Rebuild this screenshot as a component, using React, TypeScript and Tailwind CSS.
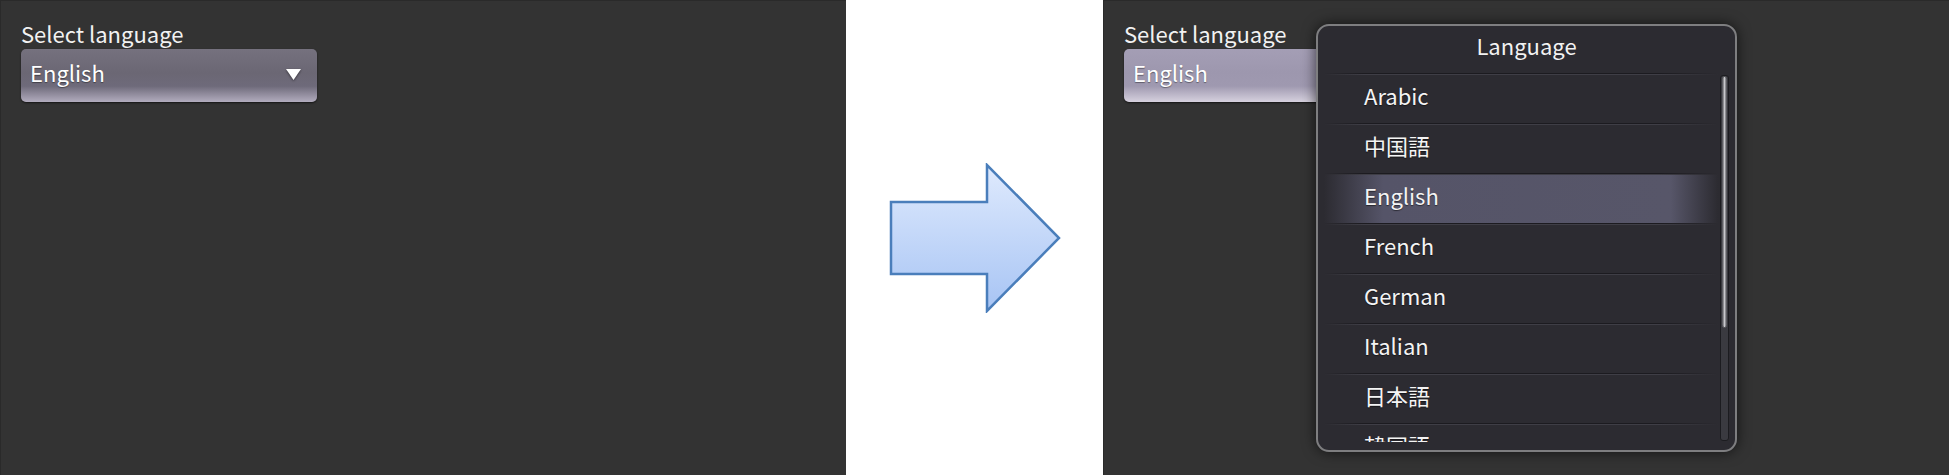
import React from 'react';

const FONT = "font-['Noto_Sans_CJK_JP','Noto_Sans',sans-serif]";

const languages = ['Arabic', '中国語', 'English', 'French', 'German', 'Italian', '日本語', '韓国語'];

const Dropdown: React.FC<{ open?: boolean }> = ({ open }) => {
  return (
    <div
      className={
        'mt-[4px] flex h-[53px] w-[296px] items-center justify-between rounded-[5px] pl-[9px] pr-[16px] shadow-[0_1px_2px_rgba(0,0,0,0.6)] ' +
        (open
          ? 'bg-[linear-gradient(to_bottom,#a49eb5_0%,#9d97ae_45%,#9f99b0_70%,#d6d1de_100%)]'
          : 'bg-[linear-gradient(to_bottom,#75717e_0%,#6b6774_45%,#6e6a7a_70%,#b2acbe_100%)]')
      }
    >
      <span className="pb-[7px] text-[22px] leading-none text-white [text-shadow:0_1px_1px_rgba(0,0,0,0.4)]">English</span>
      {!open && (
        <svg width="15" height="11" viewBox="0 0 15 11" className="mb-[2px] drop-shadow-[0_1px_1px_rgba(0,0,0,0.5)]">
          <polygon points="0,0 15,0 7.5,11" fill="#ffffff" />
        </svg>
      )}
    </div>
  );
};

const Separator: React.FC = () => (
  <div className="flex flex-col">
    <div className="h-px bg-[linear-gradient(to_right,transparent,#1c1b20_10%,#1c1b20_85%,transparent)]" />
    <div className="h-px bg-[linear-gradient(to_right,transparent,#3f3e46_10%,#3f3e46_85%,transparent)]" />
  </div>
);

const Panel: React.FC<{ children?: React.ReactNode }> = ({ children }) => (
  <div className="relative h-[475px] w-[846px] shrink-0 border-l border-t border-[#2a2a2a] bg-[#333333] pl-[20px] pt-[20px]">
    {children}
  </div>
);

const Popup: React.FC = () => {
  return (
    <div className="absolute left-[212px] top-[23px] flex h-[428px] w-[421px] flex-col rounded-[13px] border-2 border-[#7e7e80] bg-[#2c2b31] shadow-[0_0_14px_rgba(0,0,0,0.65)]">
      <div className="flex h-[47px] items-center justify-center pb-[8px] text-[22px] text-[#f2f2f2]">Language</div>
      <div className="flex">
        <div className="ml-[6px] h-[369px] w-[394px] overflow-hidden">
          <Separator />
          {languages.map((lang) => (
            <div key={lang}>
              <div
                className={
                  'flex h-[48px] items-center pb-[8px] pl-[40px] text-[22px] text-[#f4f4f4] [text-shadow:0_1px_1px_rgba(0,0,0,0.5)] ' +
                  (lang === 'English'
                    ? 'bg-[linear-gradient(to_right,transparent_0%,#555468_15%,#575669_88%,transparent_100%)]'
                    : '')
                }
              >
                {lang}
              </div>
              <Separator />
            </div>
          ))}
        </div>
        <div className="ml-[2px] mt-[2px] h-[366px] w-[9px] rounded-[3px] border border-[#1c1c20] bg-[#3a3a40]">
          <div className="mx-auto h-[252px] w-[5px] rounded-[3px] border border-[#5d5d62] bg-[linear-gradient(to_right,#707075,#c8c8cc,#707075)]" />
        </div>
      </div>
    </div>
  );
};

export default function App() {
  return (
    <div className={`flex h-[475px] w-[1949px] bg-white ${FONT}`}>
      <Panel>
        <div className="text-[22px] leading-[24px] text-[#f2f2f2]">Select language</div>
        <Dropdown />
      </Panel>

      <div className="flex flex-1 items-center justify-center">
        <svg width="172" height="150" viewBox="0 0 172 150">
          <defs>
            <linearGradient id="arrowFill" x1="0" y1="0" x2="0" y2="1">
              <stop offset="0%" stopColor="#dfeafd" />
              <stop offset="100%" stopColor="#a7c4f4" />
            </linearGradient>
          </defs>
          <polygon
            points="2,39 98,39 98,2 170,75 98,148 98,111 2,111"
            fill="url(#arrowFill)"
            stroke="#4a7ebb"
            strokeWidth="2.5"
            strokeLinejoin="miter"
          />
        </svg>
      </div>

      <Panel>
        <div className="text-[22px] leading-[24px] text-[#f2f2f2]">Select language</div>
        <Dropdown open />
        <Popup />
      </Panel>
    </div>
  );
}
